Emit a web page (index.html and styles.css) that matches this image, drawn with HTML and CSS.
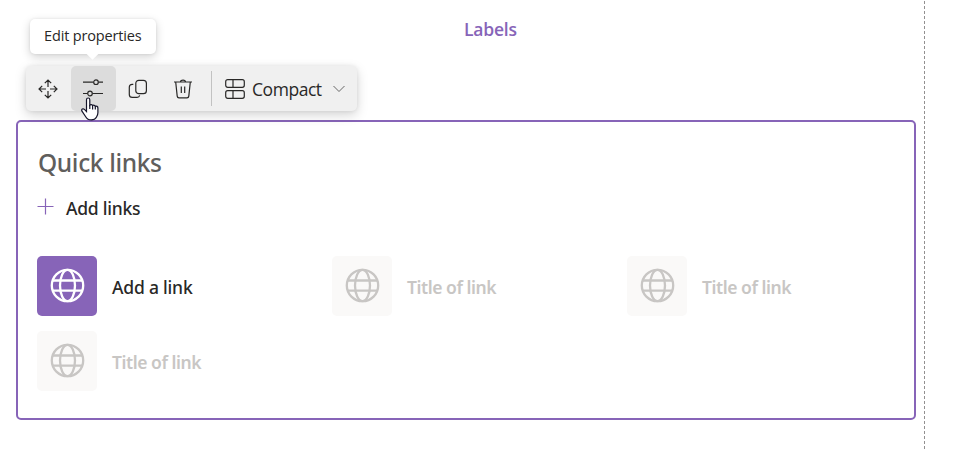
FILE: index.html
```
<!DOCTYPE html>
<html lang="en">
<head>
<meta charset="utf-8">
<title>Quick links</title>
<link rel="stylesheet" href="styles.css">
</head>
<body>
<svg class="defs" aria-hidden="true">
  <symbol id="globe" viewBox="0 0 36 36">
    <g fill="none" stroke="currentColor" stroke-width="2.3">
      <circle cx="18.5" cy="17.5" r="15.7"/>
      <ellipse cx="18.5" cy="17.5" rx="7.5" ry="15.7"/>
      <path d="M3.7 12.5h29.6M3.7 22.7h29.6"/>
    </g>
  </symbol>
</svg>
<main class="canvas">
  <header class="column-title"><span class="labels">Labels</span></header>
  <div class="toolbar">
    <button class="tool" aria-label="Move">
      <svg width="20" height="20" viewBox="0 0 20 20"><path d="M10 1v7M10 12v7M1 10h7M12 10h7M6.8 4.2 10 1l3.2 3.2M6.8 15.8 10 19l3.2-3.2M4.2 6.8 1 10l3.2 3.2M15.8 6.8 19 10l-3.2 3.2"/></svg>
    </button>
    <button class="tool active" aria-label="Edit properties">
      <svg width="20" height="20" viewBox="0 0 20 20"><path d="M0 3.2h10.5M15.5 3.2H20M0 14.5h4.5M9.5 14.5H20"/><circle cx="13" cy="3.2" r="2.3"/><circle cx="7" cy="14.5" r="2.3"/></svg>
      <span class="tooltip"><span class="tip-text">Edit properties</span></span>
      <svg class="cursor" width="18" height="24" viewBox="0 0 18 24"><path d="M5.5 14.5V2.8c0-2.4 3.3-2.4 3.3 0v5.4c.8-1 2.5-.7 2.8.5.9-.9 2.4-.4 2.7.7 1.2-.6 2.6.1 2.6 1.5v4.8c0 2-.8 3.2-1.5 4.5-.9 1.7-2.4 2.7-5 2.7-3 0-4.5-1-5.7-3.2L1 14.2c-1-1.8 1-3.2 2.4-1.8z"/><path d="M8.8 8v4M11.6 8.8v3.6M14.3 9.6v3"/></svg>
    </button>
    <button class="tool" aria-label="Duplicate">
      <svg width="20" height="20" viewBox="0 0 20 20"><rect x="7.8" y="1.3" width="10.6" height="13.4" rx="3"/><path d="M5.3 5.3H4.2c-1.7 0-2.9 1.2-2.9 2.9v7.3c0 1.7 1.2 2.9 2.9 2.9h4.9c1.4 0 2.3-.8 2.6-2"/></svg>
    </button>
    <button class="tool" aria-label="Delete">
      <svg width="20" height="20" viewBox="0 0 20 20"><path d="M1 3h18M7.5 3c0-2.6 5-2.6 5 0M2.7 3l1.5 14.1c.1 1 .8 1.7 1.8 1.7h8c1 0 1.7-.7 1.8-1.7L17.3 3M8.3 7.4v6.6M11.7 7.4v6.6"/></svg>
    </button>
    <span class="divider"></span>
    <button class="layout">
      <svg width="20" height="20" viewBox="0 0 20 20"><rect x=".7" y=".7" width="18.6" height="7.6" rx="2"/><rect x=".7" y="11.7" width="18.6" height="7.6" rx="2"/><path d="M8 .7v7.6M8 11.7v7.6"/></svg>
      <span class="compact">Compact</span>
      <svg class="chevron" width="12" height="8" viewBox="0 0 12 8"><path d="M.5 1 6 6.5 11.5 1"/></svg>
    </button>
  </div>
  <section class="webpart">
    <h2><span class="heading">Quick links</span></h2>
    <button class="add">
      <svg width="17" height="17" viewBox="0 0 17 17"><path d="M8.5 .5v16M.5 8.5h16"/></svg>
      <span class="add-text">Add links</span>
    </button>
    <div class="links">
      <div class="link primary"><span class="tile"><svg><use href="#globe"/></svg></span><span class="first-text">Add a link</span></div>
      <div class="link"><span class="tile"><svg><use href="#globe"/></svg></span><span class="link-text">Title of link</span></div>
      <div class="link"><span class="tile"><svg><use href="#globe"/></svg></span><span class="link-text">Title of link</span></div>
      <div class="link"><span class="tile"><svg><use href="#globe"/></svg></span><span class="link-text">Title of link</span></div>
    </div>
  </section>
</main>
</body>
</html>
```
FILE: styles.css
```
* { box-sizing: border-box; }
body { margin: 0; height: 450px; overflow: hidden; background: #fff; font-family: "Noto Sans", "Open Sans", sans-serif; color: #292827; }
button { border: 0; padding: 0; background: none; font: inherit; color: inherit; }
svg { fill: none; stroke: currentColor; stroke-width: 1.2; flex: none; }
span { white-space: nowrap; }
.defs { display: none; }
.canvas { width: 925px; height: 449px; padding: 0 9px 0 16px; background: repeating-linear-gradient(to bottom, transparent 0 1px, #929090 1px 4px, transparent 4px 5px) right top / 1px 100% no-repeat; }
.column-title { height: 66px; padding: 17px 0 0 448px; line-height: 25px; color: #8764b8; }
.labels { font-family: "Open Sans", sans-serif; font-size: 17.5px; font-weight: 600; letter-spacing: -.2px; }
.toolbar { position: relative; z-index: 1; display: flex; align-items: center; width: 331px; height: 45px; margin-left: 10px; border-radius: 5px; background: #f0f0f0; box-shadow: 0 4px 12px rgba(0,0,0,.17), 0 0 4px rgba(0,0,0,.08); }
.tool { position: relative; width: 45px; height: 45px; display: flex; align-items: center; justify-content: center; border-radius: 5px; }
.tool > svg:first-child { margin-right: 1px; }
.tool.active { background: #dcdcdc; }
.tooltip { position: absolute; left: -41px; top: -47px; width: 126px; height: 35px; padding-left: 14px; border-radius: 5px; background: #fff; text-align: left; line-height: 33px; box-shadow: 0 3px 10px rgba(0,0,0,.18), 0 0 3px rgba(0,0,0,.08); }
.tooltip::after { content: ""; position: absolute; left: 58px; top: 30px; width: 9px; height: 9px; background: #fff; transform: rotate(45deg); }
.tip-text { font-family: "Open Sans", sans-serif; font-size: 14.5px; letter-spacing: -.15px; }
.cursor { position: absolute; left: 10px; top: 31px; fill: #fff; stroke: #15152a; stroke-width: 1.2; }
.divider { width: 1px; height: 35px; margin-left: 5px; background: #c2c2c2; }
.layout { display: flex; align-items: center; margin-left: 13px; }
.compact { width: 72px; margin-left: 7px; text-align: left; font-family: "Open Sans", sans-serif; font-size: 17.5px; letter-spacing: -.45px; }
.chevron { margin-left: 9px; stroke: #666; stroke-width: 1; }
.webpart { width: 900px; height: 300px; margin-top: 9px; padding: 25px 19px 0; border: 2px solid #8764b8; border-radius: 5px; }
h2 { margin: 0; padding-left: 1px; height: 49px; line-height: 31px; color: #605e5c; }
.heading { font-size: 24.5px; font-weight: 500; letter-spacing: -.35px; }
.add { display: flex; align-items: center; height: 24px; }
.add svg { margin-bottom: 4px; stroke: #8764b8; }
.add-text { margin-left: 12px; font-size: 17.5px; font-weight: 500; letter-spacing: -.25px; }
.links { display: grid; grid-template-columns: repeat(3, 295px); row-gap: 15px; margin-top: 36px; }
.link { display: flex; align-items: center; gap: 15px; color: #c8c6c4; }
.tile { width: 60px; height: 60px; display: grid; place-items: center; border-radius: 5px; background: #faf9f8; }
.tile svg { width: 36px; height: 36px; }
.primary { color: #292827; }
.primary .tile { color: #fff; background: #8764b8; }
.first-text, .link-text { padding-top: 2px; font-size: 17.5px; font-weight: 500; letter-spacing: -.2px; }
.link-text { font-weight: 600; letter-spacing: -.45px; }
```
